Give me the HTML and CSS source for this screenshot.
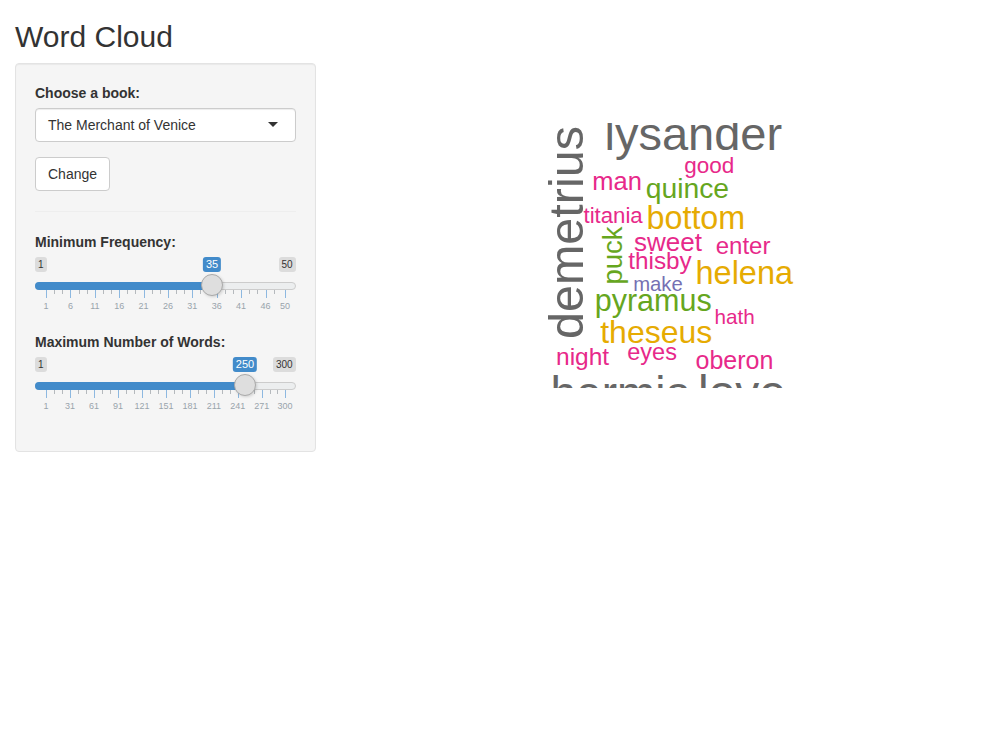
FILE: index.html
```html
<!DOCTYPE html>
<html>
<head>
<meta charset="utf-8">
<title>Word Cloud</title>
<link rel="stylesheet" href="styles.css">
</head>
<body>
<div class="container-fluid">
  <h2 class="title">Word Cloud</h2>
  <div class="row">
    <div class="col-side">
      <form class="well">
        <div class="form-group">
          <label class="control-label">Choose a book:</label>
          <div class="select">
            <span class="select-text">The Merchant of Venice</span>
            <span class="caret"></span>
          </div>
        </div>
        <button type="button" class="btn">Change</button>
        <hr>
        <div class="form-group">
          <label class="control-label">Minimum Frequency:</label>
          <div class="irs">
            <span class="irs-line"></span>
            <span class="irs-bar" style="width:177px"></span>
            <span class="irs-min">1</span>
            <span class="irs-max">50</span>
            <span class="irs-single" style="left:177px">35</span>
            <span class="irs-grid">
              <span class="pol" style="left:11px"></span>
              <span class="pol small" style="left:19.1px"></span>
              <span class="pol small" style="left:27.3px"></span>
              <span class="pol" style="left:35.4px"></span>
              <span class="pol small" style="left:43.5px"></span>
              <span class="pol small" style="left:51.6px"></span>
              <span class="pol" style="left:59.8px"></span>
              <span class="pol small" style="left:67.9px"></span>
              <span class="pol small" style="left:76px"></span>
              <span class="pol" style="left:84.2px"></span>
              <span class="pol small" style="left:92.3px"></span>
              <span class="pol small" style="left:100.4px"></span>
              <span class="pol" style="left:108.6px"></span>
              <span class="pol small" style="left:116.7px"></span>
              <span class="pol small" style="left:124.8px"></span>
              <span class="pol" style="left:132.9px"></span>
              <span class="pol small" style="left:141.1px"></span>
              <span class="pol small" style="left:149.2px"></span>
              <span class="pol" style="left:157.3px"></span>
              <span class="pol small" style="left:165.4px"></span>
              <span class="pol small" style="left:173.6px"></span>
              <span class="pol" style="left:181.7px"></span>
              <span class="pol small" style="left:189.8px"></span>
              <span class="pol small" style="left:198px"></span>
              <span class="pol" style="left:206.1px"></span>
              <span class="pol small" style="left:214.2px"></span>
              <span class="pol small" style="left:222.4px"></span>
              <span class="pol" style="left:230.5px"></span>
              <span class="pol small" style="left:238.6px"></span>
              <span class="pol" style="left:250px"></span>
              <span class="gt" style="left:11px">1</span>
              <span class="gt" style="left:35.4px">6</span>
              <span class="gt" style="left:59.8px">11</span>
              <span class="gt" style="left:84.2px">16</span>
              <span class="gt" style="left:108.6px">21</span>
              <span class="gt" style="left:132.9px">26</span>
              <span class="gt" style="left:157.3px">31</span>
              <span class="gt" style="left:181.7px">36</span>
              <span class="gt" style="left:206.1px">41</span>
              <span class="gt" style="left:230.5px">46</span>
              <span class="gt" style="left:250px">50</span>
            </span>
            <span class="irs-handle" style="left:177px"></span>
          </div>
        </div>
        <div class="form-group">
          <label class="control-label">Maximum Number of Words:</label>
          <div class="irs">
            <span class="irs-line"></span>
            <span class="irs-bar" style="width:210px"></span>
            <span class="irs-min">1</span>
            <span class="irs-max">300</span>
            <span class="irs-single" style="left:210px">250</span>
            <span class="irs-grid">
              <span class="pol" style="left:11px"></span>
              <span class="pol small" style="left:19px"></span>
              <span class="pol small" style="left:27px"></span>
              <span class="pol" style="left:35px"></span>
              <span class="pol small" style="left:43px"></span>
              <span class="pol small" style="left:51px"></span>
              <span class="pol" style="left:59px"></span>
              <span class="pol small" style="left:67px"></span>
              <span class="pol small" style="left:75px"></span>
              <span class="pol" style="left:82.9px"></span>
              <span class="pol small" style="left:90.9px"></span>
              <span class="pol small" style="left:98.9px"></span>
              <span class="pol" style="left:106.9px"></span>
              <span class="pol small" style="left:114.9px"></span>
              <span class="pol small" style="left:122.9px"></span>
              <span class="pol" style="left:130.9px"></span>
              <span class="pol small" style="left:138.9px"></span>
              <span class="pol small" style="left:146.9px"></span>
              <span class="pol" style="left:154.9px"></span>
              <span class="pol small" style="left:162.9px"></span>
              <span class="pol small" style="left:170.9px"></span>
              <span class="pol" style="left:178.9px"></span>
              <span class="pol small" style="left:186.9px"></span>
              <span class="pol small" style="left:194.8px"></span>
              <span class="pol" style="left:202.8px"></span>
              <span class="pol small" style="left:210.8px"></span>
              <span class="pol small" style="left:218.8px"></span>
              <span class="pol" style="left:226.8px"></span>
              <span class="pol small" style="left:234.6px"></span>
              <span class="pol small" style="left:242.3px"></span>
              <span class="pol" style="left:250px"></span>
              <span class="gt" style="left:11px">1</span>
              <span class="gt" style="left:35px">31</span>
              <span class="gt" style="left:59px">61</span>
              <span class="gt" style="left:82.9px">91</span>
              <span class="gt" style="left:106.9px">121</span>
              <span class="gt" style="left:130.9px">151</span>
              <span class="gt" style="left:154.9px">181</span>
              <span class="gt" style="left:178.9px">211</span>
              <span class="gt" style="left:202.8px">241</span>
              <span class="gt" style="left:226.8px">271</span>
              <span class="gt" style="left:250px">300</span>
            </span>
            <span class="irs-handle" style="left:210px"></span>
          </div>
        </div>
      </form>
    </div>
    <div class="col-main">
      <div class="plot">
        <svg class="cloud" width="631" height="400" viewBox="346 63 631 400" xmlns="http://www.w3.org/2000/svg">
          <defs>
            <clipPath id="plotclip"><rect x="500" y="123" width="340" height="265"/></clipPath>
          </defs>
          <g clip-path="url(#plotclip)">
            <text class="w gray" x="604.5" y="150" font-size="47">lysander</text>
            <text class="w gray" transform="translate(583 339) rotate(-90)" font-size="48.5">demetrius</text>
            <text class="w pink" x="684.3" y="172.5" font-size="22.5">good</text>
            <text class="w pink" x="592.3" y="190" font-size="25.5">man</text>
            <text class="w green" x="645.7" y="198" font-size="28.3">quince</text>
            <text class="w pink" x="583.5" y="223" font-size="22.2">titania</text>
            <text class="w yellow" x="646.5" y="228.5" font-size="32.3">bottom</text>
            <text class="w green" transform="translate(622 284.5) rotate(-90)" font-size="27.5">puck</text>
            <text class="w pink" x="634" y="250.5" font-size="26">sweet</text>
            <text class="w pink" x="715.7" y="253.5" font-size="24">enter</text>
            <text class="w pink" x="628.3" y="269" font-size="24.3">thisby</text>
            <text class="w yellow" x="695.5" y="284" font-size="32.5">helena</text>
            <text class="w purple" x="633.2" y="290.5" font-size="20.3">make</text>
            <text class="w green" x="594.7" y="310.5" font-size="30.5">pyramus</text>
            <text class="w pink" x="714.6" y="324" font-size="20.7">hath</text>
            <text class="w yellow" x="600.2" y="343" font-size="32">theseus</text>
            <text class="w pink" x="556" y="364.5" font-size="24.5">night</text>
            <text class="w pink" x="627.3" y="360" font-size="23.5">eyes</text>
            <text class="w pink" x="695.5" y="369" font-size="25">oberon</text>
            <text class="w gray" x="550.5" y="409" font-size="46">hermia</text>
            <text class="w gray" x="698" y="409" font-size="48">love</text>
          </g>
        </svg>
      </div>
    </div>
  </div>
</div>
</body>
</html>
```
FILE: styles.css
```css
* {
  box-sizing: border-box;
}

html, body {
  margin: 0;
  padding: 0;
  background: #fff;
}

body {
  font-family: "Liberation Sans", Arial, Helvetica, sans-serif;
  font-size: 14px;
  line-height: 1.42857143;
  color: #333;
}

.container-fluid {
  padding: 0 15px;
}

.title {
  margin: 20px 0 10px;
  font-size: 30px;
  font-weight: 500;
  line-height: 1.1;
  color: #333;
}

.row {
  display: flex;
  margin: 0 -15px;
}

.col-side {
  width: 33.33333333%;
  padding: 0 15px;
}

.col-main {
  width: 66.66666667%;
  padding: 0 15px;
}

.well {
  margin: 0 0 20px;
  padding: 19px;
  background: #f5f5f5;
  border: 1px solid #e3e3e3;
  border-radius: 4px;
  box-shadow: inset 0 1px 1px rgba(0, 0, 0, 0.05);
}

.form-group {
  margin-bottom: 15px;
}

.control-label {
  display: inline-block;
  max-width: 100%;
  margin-bottom: 5px;
  font-weight: bold;
}

.select {
  display: flex;
  align-items: center;
  justify-content: space-between;
  height: 34px;
  padding: 0 17px 0 12px;
  background: #fff;
  border: 1px solid #ccc;
  border-radius: 4px;
  box-shadow: inset 0 1px 1px rgba(0, 0, 0, 0.075);
  color: #333;
}

.caret {
  width: 0;
  height: 0;
  border-style: solid;
  border-width: 5px 5px 0 5px;
  border-color: #333 transparent transparent transparent;
  margin-top: -1px;
}

.btn {
  display: inline-block;
  height: 34px;
  margin: 0;
  padding: 6px 12px;
  font-family: inherit;
  font-size: 14px;
  line-height: 1.42857143;
  color: #333;
  background: #fff;
  border: 1px solid #ccc;
  border-radius: 4px;
  vertical-align: middle;
}

hr {
  height: 0;
  margin: 20px 0;
  border: 0;
  border-top: 1px solid #eee;
  box-sizing: content-box;
}

/* range slider */
.irs {
  position: relative;
  display: block;
  height: 60px;
  font-family: "Liberation Sans", Arial, sans-serif;
}

.irs-line {
  position: absolute;
  left: 0;
  right: 0;
  top: 25px;
  height: 8px;
  background: #eceeef;
  border: 1px solid #ccc;
  border-radius: 16px;
}

.irs-bar {
  position: absolute;
  left: 0;
  top: 25px;
  height: 8px;
  background: #428bca;
  border-radius: 16px 0 0 16px;
}

.irs-min,
.irs-max {
  position: absolute;
  top: 0;
  padding: 1px 3px;
  font-size: 10px;
  line-height: 1.333;
  color: #333;
  background: rgba(0, 0, 0, 0.1);
  border-radius: 3px;
}

.irs-min {
  left: 0;
}

.irs-max {
  right: 0;
}

.irs-single {
  position: absolute;
  top: 0;
  padding: 1px 3px;
  font-size: 11px;
  line-height: 1.2;
  color: #fff;
  background: #428bca;
  border-radius: 3px;
  transform: translateX(-50%);
}

.irs-handle {
  position: absolute;
  top: 17px;
  width: 22px;
  height: 22px;
  margin-left: -11px;
  background: #dedede;
  border: 1px solid #aaa;
  border-radius: 50%;
  box-shadow: 1px 1px 3px rgba(0, 0, 0, 0.15);
}

.irs-grid {
  position: absolute;
  left: 0;
  right: 0;
  top: 33px;
  height: 27px;
}

.pol {
  position: absolute;
  top: 0;
  width: 1px;
  height: 8px;
  background: #8db8e0;
}

.pol.small {
  height: 4px;
  background: #b5b9bd;
}

.gt {
  position: absolute;
  top: 12px;
  font-size: 9px;
  line-height: 9px;
  color: #99a4ac;
  white-space: nowrap;
  transform: translateX(-50%);
}

/* plot */
.plot {
  width: 100%;
  height: 400px;
}

.cloud {
  display: block;
}

.w {
  font-family: "Liberation Sans", Arial, sans-serif;
}

.gray { fill: #666666; }
.pink { fill: #e7298a; }
.green { fill: #66a61e; }
.yellow { fill: #e6ab02; }
.purple { fill: #7570b3; }
```
